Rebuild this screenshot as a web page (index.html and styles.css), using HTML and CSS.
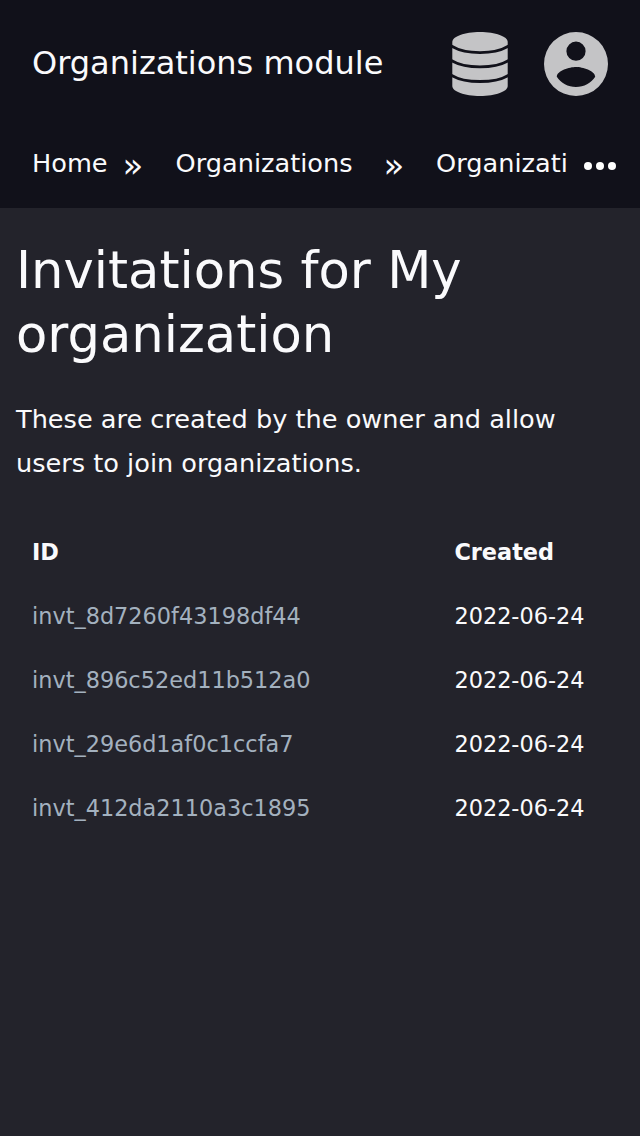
FILE: index.html
```html
<!DOCTYPE html>
<html lang="en">
<head>
<meta charset="utf-8">
<title>Invitations</title>
<link rel="stylesheet" href="styles.css">
</head>
<body>
<header class="header">
  <div class="title">Organizations module</div>
  <svg class="icon database" viewBox="0 0 56 64"><path d="M.3 10C.3 4.500 12.500 0 28 0s27.700 4.500 27.700 10v44C55.700 59.500 43.500 64 28 64S.3 59.500.3 54z"/><path class="gap" d="M-1 13.800C6 18.300 17 20.600 28 20.600s22-2.300 29-6.800M-1 28.300C6 32.800 17 34.900 28 34.900s22-2.100 29-6.600M-1 42.900C6 47.400 17 49.500 28 49.500s22-2.100 29-6.600"/></svg>
  <svg class="icon account" viewBox="2 2 20 20"><path d="M12 2a10 10 0 1 0 0 20a10 10 0 0 0 0-20zm0 3a3 3 0 1 1 0 6a3 3 0 0 1 0-6zm0 14.200c-2.500 0-4.710-1.280-6-3.220c.03-1.990 4-3.080 6-3.080c1.990 0 5.970 1.090 6 3.080c-1.290 1.940-3.500 3.220-6 3.220z"/></svg>
</header>
<nav class="breadcrumb">
  <a class="crumb">Home</a><span class="separator">»</span>
  <a class="crumb">Organizations</a><span class="separator wide">»</span>
  <a class="crumb clipped">Organizati</a>
  <svg class="more" viewBox="0 0 32 8"><circle cx="4" cy="4" r="4"/><circle cx="16" cy="4" r="4"/><circle cx="28" cy="4" r="4"/></svg>
</nav>
<main class="content">
  <h1>Invitations for My organization</h1>
  <p>These are created by the owner and allow users to join organizations.</p>
  <table>
    <tr><th>ID</th><th>Created</th></tr>
    <tr><td><a>invt_8d7260f43198df44</a></td><td>2022-06-24</td></tr>
    <tr><td><a>invt_896c52ed11b512a0</a></td><td>2022-06-24</td></tr>
    <tr><td><a>invt_29e6d1af0c1ccfa7</a></td><td>2022-06-24</td></tr>
    <tr><td><a>invt_412da2110a3c1895</a></td><td>2022-06-24</td></tr>
  </table>
</main>
</body>
</html>
```
FILE: styles.css
```css
* { box-sizing: border-box; }
body { margin: 0; min-height: 1136px; background: #23232b; color: #fafafc; font-family: "DejaVu Sans", sans-serif; }
.header { height: 128px; padding: 0 32px; display: flex; align-items: center; background: #11111a; }
.title { flex: 1; padding-bottom: 2px; font-size: 32px; white-space: nowrap; }
.icon { height: 64px; fill: #c4c4c6; }
.database { width: 56px; }
.gap { fill: none; stroke: #11111a; stroke-width: 2.8; }
.account { width: 64px; margin-left: 36px; }
.breadcrumb { height: 80px; padding: 0 24px 0 32px; display: flex; align-items: flex-start; background: #11111a; font-size: 25.6px; line-height: 70px; white-space: nowrap; }
.separator { width: 68px; padding-left: 15px; font-size: 34px; line-height: 74px; }
.separator.wide { width: 83.5px; padding-left: 31px; }
.clipped { width: 132px; }
.more { width: 32px; height: 8px; margin: 34px 0 0 auto; fill: #fff; }
.content { padding: 30px 16px; }
h1 { margin: 0; font-size: 51.2px; font-weight: 400; line-height: 64px; }
p { margin: 31px 0 35px; font-size: 25.6px; line-height: 44px; }
table { width: 608px; border-collapse: collapse; table-layout: fixed; font-size: 22.4px; }
th, td { height: 64px; padding: 0 16px; text-align: left; }
th:first-child { width: 422.4px; }
td a { color: #a3b1bf; }
```
